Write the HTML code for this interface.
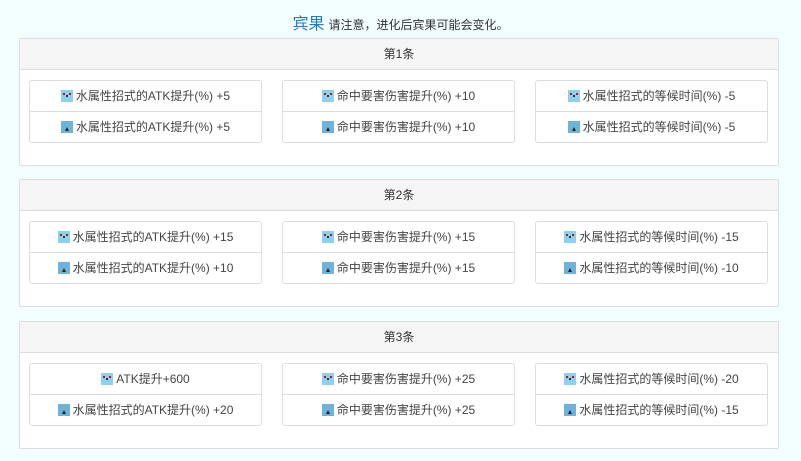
<!DOCTYPE html>
<html><head><meta charset="utf-8"><style>
body{margin:0;width:801px;height:461px;background:#f2fdff;font-family:"Liberation Sans","Noto Sans CJK SC",sans-serif;color:#333;position:relative;overflow:hidden}
.t{position:absolute;top:10px;left:0;width:801px;text-align:center;font-size:12px}
.t b{font-weight:normal;color:#2a7ab8;font-size:16px;margin-right:4px}
.p{position:absolute;left:19px;width:758px;height:126px;background:#fff;border:1px solid #ddd;border-radius:2px}
.h{height:30px;background:#f5f5f5;border-bottom:1px solid #ddd;text-align:center;line-height:30px;font-size:12px}
.c{position:absolute;top:41px;width:231px;height:61px;border:1px solid #ddd;border-radius:3px}
.r{height:30px;line-height:30px;text-align:center;font-size:12px;color:#444}
.r+.r{border-top:1px solid #ddd}
.i{display:inline-block;width:12px;height:12px;vertical-align:-2px;margin-right:3px;position:relative}
.a{background:#8fd0ee}.a:before{content:"";position:absolute;left:2px;top:3px;width:2px;height:2px;background:#922;box-shadow:6px 0 #922,3px 2px #333}
.b{background:#6fb4d8}.b:before{content:"";position:absolute;left:4px;top:6px;border-left:2px solid transparent;border-right:2px solid transparent;border-bottom:4px solid #223}
</style></head><body>
<div class="t"><b>宾果</b>请注意，进化后宾果可能会变化。</div>

<div class="p" style="top:38px"><div class="h">第1条</div>
<div class="c" style="left:9px"><div class="r"><i class="i a"></i>水属性招式的ATK提升(%) +5</div><div class="r"><i class="i b"></i>水属性招式的ATK提升(%) +5</div></div>
<div class="c" style="left:262px"><div class="r"><i class="i a"></i>命中要害伤害提升(%) +10</div><div class="r"><i class="i b"></i>命中要害伤害提升(%) +10</div></div>
<div class="c" style="left:515px"><div class="r"><i class="i a"></i>水属性招式的等候时间(%) -5</div><div class="r"><i class="i b"></i>水属性招式的等候时间(%) -5</div></div>
</div>

<div class="p" style="top:179px"><div class="h">第2条</div>
<div class="c" style="left:9px"><div class="r"><i class="i a"></i>水属性招式的ATK提升(%) +15</div><div class="r"><i class="i b"></i>水属性招式的ATK提升(%) +10</div></div>
<div class="c" style="left:262px"><div class="r"><i class="i a"></i>命中要害伤害提升(%) +15</div><div class="r"><i class="i b"></i>命中要害伤害提升(%) +15</div></div>
<div class="c" style="left:515px"><div class="r"><i class="i a"></i>水属性招式的等候时间(%) -15</div><div class="r"><i class="i b"></i>水属性招式的等候时间(%) -10</div></div>
</div>

<div class="p" style="top:321px"><div class="h">第3条</div>
<div class="c" style="left:9px"><div class="r"><i class="i a"></i>ATK提升+600</div><div class="r"><i class="i b"></i>水属性招式的ATK提升(%) +20</div></div>
<div class="c" style="left:262px"><div class="r"><i class="i a"></i>命中要害伤害提升(%) +25</div><div class="r"><i class="i b"></i>命中要害伤害提升(%) +25</div></div>
<div class="c" style="left:515px"><div class="r"><i class="i a"></i>水属性招式的等候时间(%) -20</div><div class="r"><i class="i b"></i>水属性招式的等候时间(%) -15</div></div>
</div>
</body></html>
